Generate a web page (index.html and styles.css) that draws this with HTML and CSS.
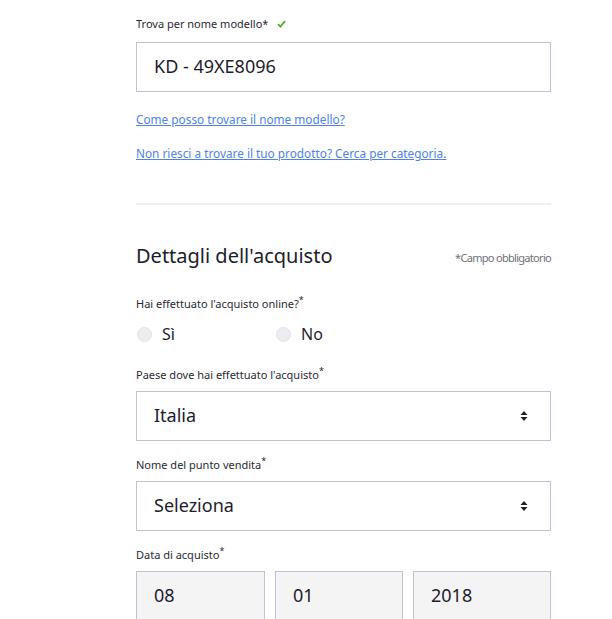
FILE: index.html
```html
<!DOCTYPE html>
<html lang="it">
<head>
    <meta charset="UTF-8">
    <meta name="viewport" content="width=device-width, initial-scale=1.0">
    <title>Registra il prodotto</title>
    <link rel="stylesheet" href="styles.css">
</head>
<body>
    <div class="form">
        <div class="field first">
            <label class="field-label">Trova per nome modello*
                <svg class="check" width="9" height="8" viewBox="0 0 9 8"><path d="M1 4.2 L3.4 6.6 L8 1.2" fill="none" stroke="#5aa832" stroke-width="1.8"/></svg>
            </label>
            <div class="text-input">KD - 49XE8096</div>
        </div>

        <div class="links">
            <a href="#">Come posso trovare il nome modello?</a>
            <a href="#">Non riesci a trovare il tuo prodotto? Cerca per categoria.</a>
        </div>

        <hr class="divider">

        <div class="section-head">
            <h2>Dettagli dell'acquisto</h2>
            <span class="required-note">*Campo obbligatorio</span>
        </div>

        <div class="field radio-field">
            <label class="field-label">Hai effettuato l'acquisto online?<sup>*</sup></label>
            <div class="radio-group">
                <span class="radio-option"><span class="radio"></span>Sì</span>
                <span class="radio-option"><span class="radio"></span>No</span>
            </div>
        </div>

        <div class="field">
            <label class="field-label">Paese dove hai effettuato l'acquisto<sup>*</sup></label>
            <div class="select">
                <span>Italia</span>
                <svg class="arrows" width="8" height="12" viewBox="0 0 8 12"><path d="M4 1 L7.5 5 L0.5 5 Z M4 11 L7.5 7 L0.5 7 Z" fill="#222"/></svg>
            </div>
        </div>

        <div class="field">
            <label class="field-label">Nome del punto vendita<sup>*</sup></label>
            <div class="select">
                <span>Seleziona</span>
                <svg class="arrows" width="8" height="12" viewBox="0 0 8 12"><path d="M4 1 L7.5 5 L0.5 5 Z M4 11 L7.5 7 L0.5 7 Z" fill="#222"/></svg>
            </div>
        </div>

        <div class="field">
            <label class="field-label">Data di acquisto<sup>*</sup></label>
            <div class="date-row">
                <div class="date-box">08</div>
                <div class="date-box">01</div>
                <div class="date-box">2018</div>
            </div>
        </div>
    </div>
</body>
</html>
```

FILE: styles.css
```css
* {
    margin: 0;
    padding: 0;
    box-sizing: border-box;
}

body {
    background: #fff;
    font-family: 'Noto Sans', 'Open Sans', sans-serif;
    color: #1f1f2b;
}

.form {
    width: 415px;
    margin-left: 136px;
    padding-top: 16px;
}

.field {
    margin-top: 16px;
}

.field.first {
    margin-top: 0;
}

.field-label {
    display: block;
    font-size: 11px;
    line-height: 16px;
    color: #2a2a33;
    margin-bottom: 8px;
}

.field.first .field-label {
    margin-bottom: 10px;
}

.field-label sup {
    font-size: 9px;
    line-height: 0;
    vertical-align: 5px;
}

.check {
    margin-left: 6px;
}

.text-input,
.select,
.date-box {
    height: 50px;
    border: 1px solid #c3c1d3;
    background: #fff;
    padding: 0 17px 3px;
    font-size: 18px;
    display: flex;
    align-items: center;
    color: #1d1d2c;
}

.select {
    justify-content: space-between;
    padding-right: 22px;
}

.select .arrows {
    margin-top: 3px;
}

.links {
    display: flex;
    flex-direction: column;
    gap: 16px;
    margin-top: 18px;
}

.links a {
    font-size: 11.8px;
    line-height: 18px;
    color: #4f82ea;
    text-decoration: underline;
}

.divider {
    border: none;
    height: 2px;
    background: #eef0f4;
    margin-top: 41px;
}

.section-head {
    display: flex;
    justify-content: space-between;
    align-items: center;
    margin-top: 36px;
}

.section-head h2 {
    font-size: 20px;
    line-height: 30px;
    font-weight: 400;
    color: #20202c;
}

.required-note {
    font-size: 11px;
    color: #6f6f78;
    letter-spacing: -0.7px;
    margin-top: 2px;
}

.radio-field {
    margin-top: 25px;
}

.radio-field .field-label {
    margin-bottom: 0;
}

.radio-field + .field {
    margin-top: 22px;
}

.radio-group {
    display: flex;
    margin-top: 11px;
}

.radio-option {
    width: 139px;
    display: flex;
    align-items: center;
    gap: 10px;
    font-size: 16px;
    line-height: 22px;
}

.radio {
    width: 15px;
    height: 15px;
    border-radius: 50%;
    background: #ededf1;
    border: 1px solid #e2e2e8;
    margin-left: 1px;
}

.date-row {
    display: grid;
    grid-template-columns: 129px 128px 1fr;
    gap: 10px;
}

.date-box {
    background: #f4f4f5;
}
```
